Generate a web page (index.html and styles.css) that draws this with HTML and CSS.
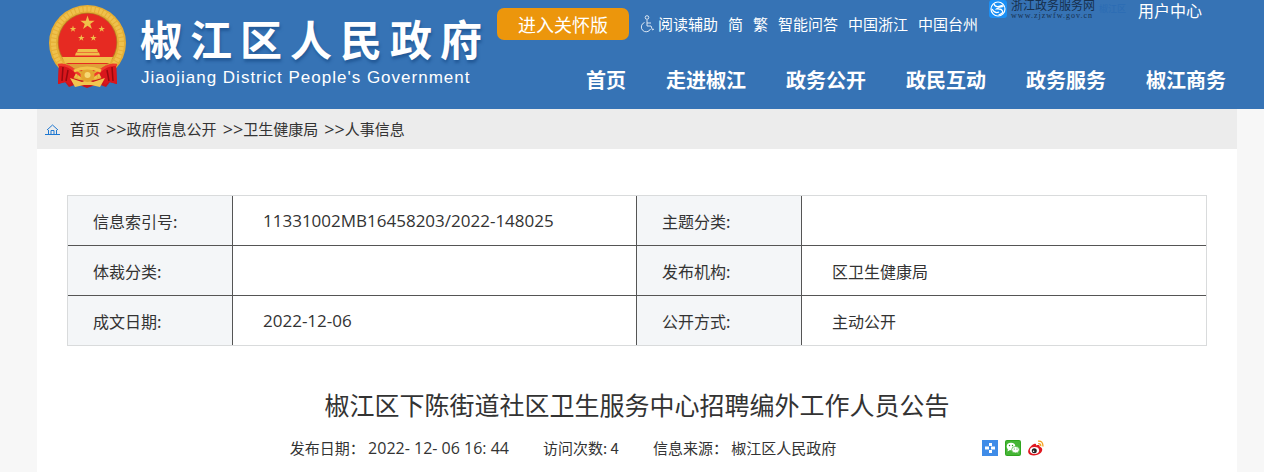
FILE: index.html
```html
<!DOCTYPE html>
<html lang="zh-CN">
<head>
  <meta charset="UTF-8" />
  <meta name="viewport" content="width=device-width, initial-scale=1.0"/>
  <title>椒江区下陈街道社区卫生服务中心招聘编外工作人员公告</title>
  <link rel="stylesheet" href="styles.css">
</head>
<body>
  <header class="header">
    <a href="#" class="brand">
      <svg class="emblem" viewBox="0 0 77 85" aria-hidden="true">
        <defs>
          <path id="star" d="M0-10 2.3-3.1 9.5-3.1 3.7 1.2 5.9 8.1 0 3.8-5.9 8.1-3.7 1.2-9.5-3.1-2.3-3.1z"/>
        </defs>
        <path d="M10 58 9 79l7-2 4 5 8-3 10 4 11-4 8 3 4-5 7 2-1-21z" fill="#c9151b"/>
        <ellipse cx="38.5" cy="38" rx="38.5" ry="38" fill="#e5ae35"/>
        <ellipse cx="38.5" cy="38" rx="34" ry="34" fill="none" stroke="#efc14c" stroke-width="5" stroke-dasharray="3 1"/>
        <circle cx="38.5" cy="37.5" r="29.8" fill="#b87a22"/>
        <circle cx="38.5" cy="37.5" r="29" fill="#e62a22"/>
        <g fill="#f0c04a">
          <use href="#star" transform="translate(38.5 18) scale(.75)"/>
          <use href="#star" transform="translate(24 24) scale(.34)"/>
          <use href="#star" transform="translate(52.7 24) scale(.34)"/>
          <use href="#star" transform="translate(32.3 33) scale(.34)"/>
          <use href="#star" transform="translate(44.4 33) scale(.34)"/>
          <path d="M29 44h19l1 3H28zM27 47.5h23l1 3H26zM13 52h51l-3 6H16z"/>
          <path d="M18 59h41l-8 5H26z" fill="#e0a038"/>
        </g>
        <path d="M10 59c6 0 11 3 17 9l-6 12-4-3-8 2zM67 59c-6 0-11 3-17 9l6 12 4-3 8 2z" fill="#d9161c"/>
        <path d="M14 62l-1 14M19 65l-2 11M63 62l1 14M58 65l2 11" stroke="#96090f" stroke-width="1.5"/>
        <path d="M9 60q9-2 18 7l11 8 12-8q9-9 18-7" fill="none" stroke="#f03a2c" stroke-width="2.5"/>
        <path d="M21 73l12 4 5-2 6 2 12-4-5 9-9-2h-7l-9 2z" fill="#f1c650"/>
        <circle cx="38.5" cy="70" r="7" fill="#e3a52f"/>
        <circle cx="38.5" cy="70" r="3" fill="#f6d873"/>
        <path d="M25 66q13-6 27 0" fill="none" stroke="#f2c34a" stroke-width="3"/>
      </svg>
      <span class="brand-text">
        <span class="brand-cn">椒江区人民政府</span>
        <span class="brand-en">Jiaojiang District People's Government</span>
      </span>
    </a>

    <div class="header-main">
      <div class="topbar">
        <button type="button" class="care">进入关怀版</button>
        <div class="links">
          <a href="#" class="access"><svg class="wheelchair" viewBox="0 0 15 18" aria-hidden="true"><circle cx="8" cy="2.500" r="1.800"/><path d="M8 5v6h4l1.500 4 1.500-1M8 8h4M5.500 7.500a4.800 4.800 0 1 0 6 6.500"/></svg>阅读辅助</a>
          <a href="#">简</a>
          <a href="#">繁</a>
          <a href="#">智能问答</a>
          <a href="#">中国浙江</a>
          <a href="#">中国台州</a>
        </div>
        <a href="#" class="zjzw">
          <svg class="zjzw-logo" viewBox="0 0 18 18" aria-hidden="true"><rect width="18" height="18" rx="3" fill="#1b8ff5"/><g fill="none" stroke="#fff" stroke-width="1.200"><circle cx="9" cy="9" r="7"/><path d="M5 4q1 3 4 2.500T14 5M14.500 6.500q-5 .5-7 2.500 5-.5 6 2t-4 4M3 9q3 5 7 3"/></g></svg>
          <span class="zjzw-text">
            <span class="zjzw-name">浙江政务服务网</span>
            <span class="zjzw-url">www.zjzwfw.gov.cn</span>
          </span>
          <span class="zjzw-area">椒江区</span>
        </a>
        <a href="#" class="user">用户中心</a>
      </div>
      <nav class="nav">
        <a href="#">首页</a>
        <a href="#">走进椒江</a>
        <a href="#">政务公开</a>
        <a href="#">政民互动</a>
        <a href="#">政务服务</a>
        <a href="#">椒江商务</a>
      </nav>
    </div>
  </header>

  <div class="wrap">
    <main class="page">
      <div class="crumbs">
        <svg class="home" viewBox="0 0 15 11" aria-hidden="true"><path d="M0 10.500h15M2 6l5.500-5L13 6M3.500 6v4M11.500 6v4M6 10V6.500h3V10"/></svg>
        <a href="#">首页</a><span class="sep">&gt;&gt;</span><a href="#">政府信息公开</a><span class="sep">&gt;&gt;</span><a href="#">卫生健康局</a><span class="sep">&gt;&gt;</span><a href="#">人事信息</a>
      </div>

      <div class="content">
        <table class="info">
          <colgroup><col class="col-label"><col><col class="col-label"><col></colgroup>
          <tr>
            <th scope="row">信息索引号:</th>
            <td class="num">11331002MB16458203/2022-148025</td>
            <th scope="row">主题分类:</th>
            <td></td>
          </tr>
          <tr>
            <th scope="row">体裁分类:</th>
            <td></td>
            <th scope="row">发布机构:</th>
            <td>区卫生健康局</td>
          </tr>
          <tr>
            <th scope="row">成文日期:</th>
            <td class="num">2022-12-06</td>
            <th scope="row">公开方式:</th>
            <td>主动公开</td>
          </tr>
        </table>

        <h1 class="title">椒江区下陈街道社区卫生服务中心招聘编外工作人员公告</h1>

        <div class="meta">
          <span>发布日期： <span class="date">2022- 12- 06 16: 44</span></span>
          <span>访问次数: 4</span>
          <span>信息来源： 椒江区人民政府</span>
          <div class="share">
            <a href="#" aria-label="分享"><svg viewBox="0 0 16 16"><rect width="16" height="16" fill="#3f8ce8"/><path d="M7 3h3v3H7zM7 10h3v3H7zM3 6.500h4v3H3zM9 6.500h4v3H9z" fill="#fff"/></svg></a>
            <a href="#" aria-label="微信"><svg viewBox="0 0 16 16"><rect width="16" height="16" rx="2" fill="#2fa51f"/><rect x="1" y="1" width="14" height="14" rx="1" fill="#45b535"/><path d="M3 9l-.5 2.500L5 10zM12 11l1.500 2.500L10.500 12z" fill="#fff"/><ellipse cx="6" cy="6.500" rx="4.300" ry="3.700" fill="#fff"/><ellipse cx="10.500" cy="9.700" rx="3.900" ry="3.200" fill="#fff" stroke="#45b535" stroke-width=".7"/><g fill="#2f9a20"><circle cx="4.500" cy="5.500" r=".7"/><circle cx="7.500" cy="5.500" r=".7"/><circle cx="9.300" cy="9" r=".6"/><circle cx="12" cy="9" r=".6"/></g></svg></a>
            <a href="#" aria-label="微博"><svg viewBox="0 0 16 16"><path d="M6 4c1.500-.7 2.500 0 2 1.500 2-.8 4-.5 3.700 1.300 4 1.500 2.800 5-.2 7-4 2.600-10.500 2-11.300-1.600C-.3 9.500 3 5.300 6 4z" fill="#e01820"/><ellipse cx="6.500" cy="10.500" rx="4.600" ry="3.400" fill="#fff"/><circle cx="6.300" cy="10.700" r="2.500" fill="#222"/><circle cx="5.600" cy="11.200" r=".8" fill="#fff"/><path d="M10 1.200q5-.7 5 5.300M10.200 3.700q2.800-.3 2.600 2.600" fill="none" stroke="#f3a11d" stroke-width="1.300"/></svg></a>
          </div>
        </div>
      </div>
    </main>
  </div>
</body>
</html>
```
FILE: styles.css
```css
* {
  box-sizing: border-box;
}
body {
  margin: 0;
  background-color: #f7f7f7;
  color: #333;
  font-family: "Noto Sans CJK SC", sans-serif;
  font-size: 15px;
  line-height: 24px;
}
a {
  color: inherit;
  text-decoration: none;
}
svg {
  display: block;
  flex: none;
}

/* header */
.header {
  display: flex;
  min-height: 109px;
  padding-left: 49px;
  background-color: #3673b5;
  color: #fff;
}
.brand {
  display: flex;
  flex: none;
  gap: 14px;
  width: 448px;
  padding-top: 5px;
}
.emblem {
  width: 77px;
  height: 85px;
}
.brand-text {
  display: flex;
  flex-direction: column;
  padding-top: 4px;
  white-space: nowrap;
}
.brand-cn {
  font-size: 42px;
  font-weight: bold;
  line-height: 58px;
  letter-spacing: 8px;
  text-shadow: 1px 3px 3px #235a98;
}
.brand-en {
  padding-left: 1px;
  font-family: "Liberation Sans", sans-serif;
  font-size: 17px;
  line-height: 22px;
  letter-spacing: 1px;
}
.header-main {
  flex: 1;
}
.topbar {
  display: flex;
  align-items: flex-start;
  height: 60px;
  white-space: nowrap;
}
.care {
  width: 132px;
  height: 32px;
  margin-top: 8px;
  padding: 0;
  border: none;
  border-radius: 7px;
  background-color: #ec960c;
  color: #fff;
  font-family: inherit;
  font-size: 18px;
  line-height: 32px;
  cursor: pointer;
}
.links {
  display: flex;
  gap: 10px;
  padding: 12px 0 0 10px;
}
.access {
  display: flex;
  align-items: center;
  gap: 4px;
}
.wheelchair {
  width: 15px;
  height: 18px;
  fill: none;
  stroke: #dce7f3;
}
.zjzw {
  display: flex;
  gap: 4px;
  margin-left: 11px;
  color: #16304e;
}
.zjzw-logo {
  width: 18px;
  height: 18px;
}
.zjzw-text {
  display: flex;
  flex-direction: column;
}
.zjzw-name {
  font-family: "Liberation Serif", "Noto Sans CJK SC", serif;
  font-size: 12px;
  line-height: 12px;
}
.zjzw-url {
  font-family: "Liberation Serif", serif;
  font-size: 8px;
  line-height: 8px;
  letter-spacing: 1px;
}
.zjzw-area {
  color: #2b6cb4;
  font-size: 9px;
  line-height: 18px;
}
.user {
  margin: 0 62px 0 auto;
  font-size: 16px;
  line-height: 20px;
}
.nav {
  display: flex;
  justify-content: flex-end;
  gap: 40px;
  padding-right: 38px;
  font-size: 20px;
  font-weight: bold;
  line-height: 40px;
  white-space: nowrap;
}

/* page body */
.wrap {
  padding: 0 27px 0 37px;
}
.page {
  max-width: 1200px;
  min-height: calc(100vh - 109px);
  margin: 0 auto;
  background-color: #fff;
}
.crumbs {
  display: flex;
  align-items: center;
  height: 40px;
  padding-left: 8px;
  background-color: #ececec;
}
.home {
  width: 15px;
  height: 11px;
  margin-right: 10px;
  fill: none;
  stroke: #1f78d1;
}
.sep {
  padding-left: 6px;
  font-family: "Open Sans", sans-serif;
  font-size: 18px;
}
.content {
  padding: 46px 30px 0;
}
.info {
  width: 100%;
  table-layout: fixed;
  border: 1px solid #d9dbdc;
  border-spacing: 0;
  font-size: 16px;
}
.col-label {
  width: 165px;
}
.info th,
.info td {
  height: 50px;
  padding: 0 0 0 30px;
  border-right: 1px solid #555;
  border-bottom: 1px solid #555;
  text-align: left;
}
.info th {
  padding-left: 25px;
  background-color: #f4f6f8;
  font-weight: normal;
}
.info td:last-child {
  border-right: none;
}
.info tr:last-child th,
.info tr:last-child td {
  height: 49px;
  border-bottom: none;
}
.info .num {
  font-family: "Open Sans", sans-serif;
  font-size: 17px;
}
.title {
  margin: 39px 0 0;
  font-size: 25px;
  font-weight: normal;
  line-height: 38px;
  text-align: center;
}
.meta {
  display: flex;
  align-items: center;
  justify-content: center;
  gap: 34px;
  margin-top: 13px;
  padding-left: 60px;
}
.date {
  font-family: "Open Sans", sans-serif;
  font-size: 16px;
}
.share {
  display: flex;
  gap: 7px;
  margin-left: 112px;
}
.share svg {
  width: 16px;
  height: 16px;
}
```
